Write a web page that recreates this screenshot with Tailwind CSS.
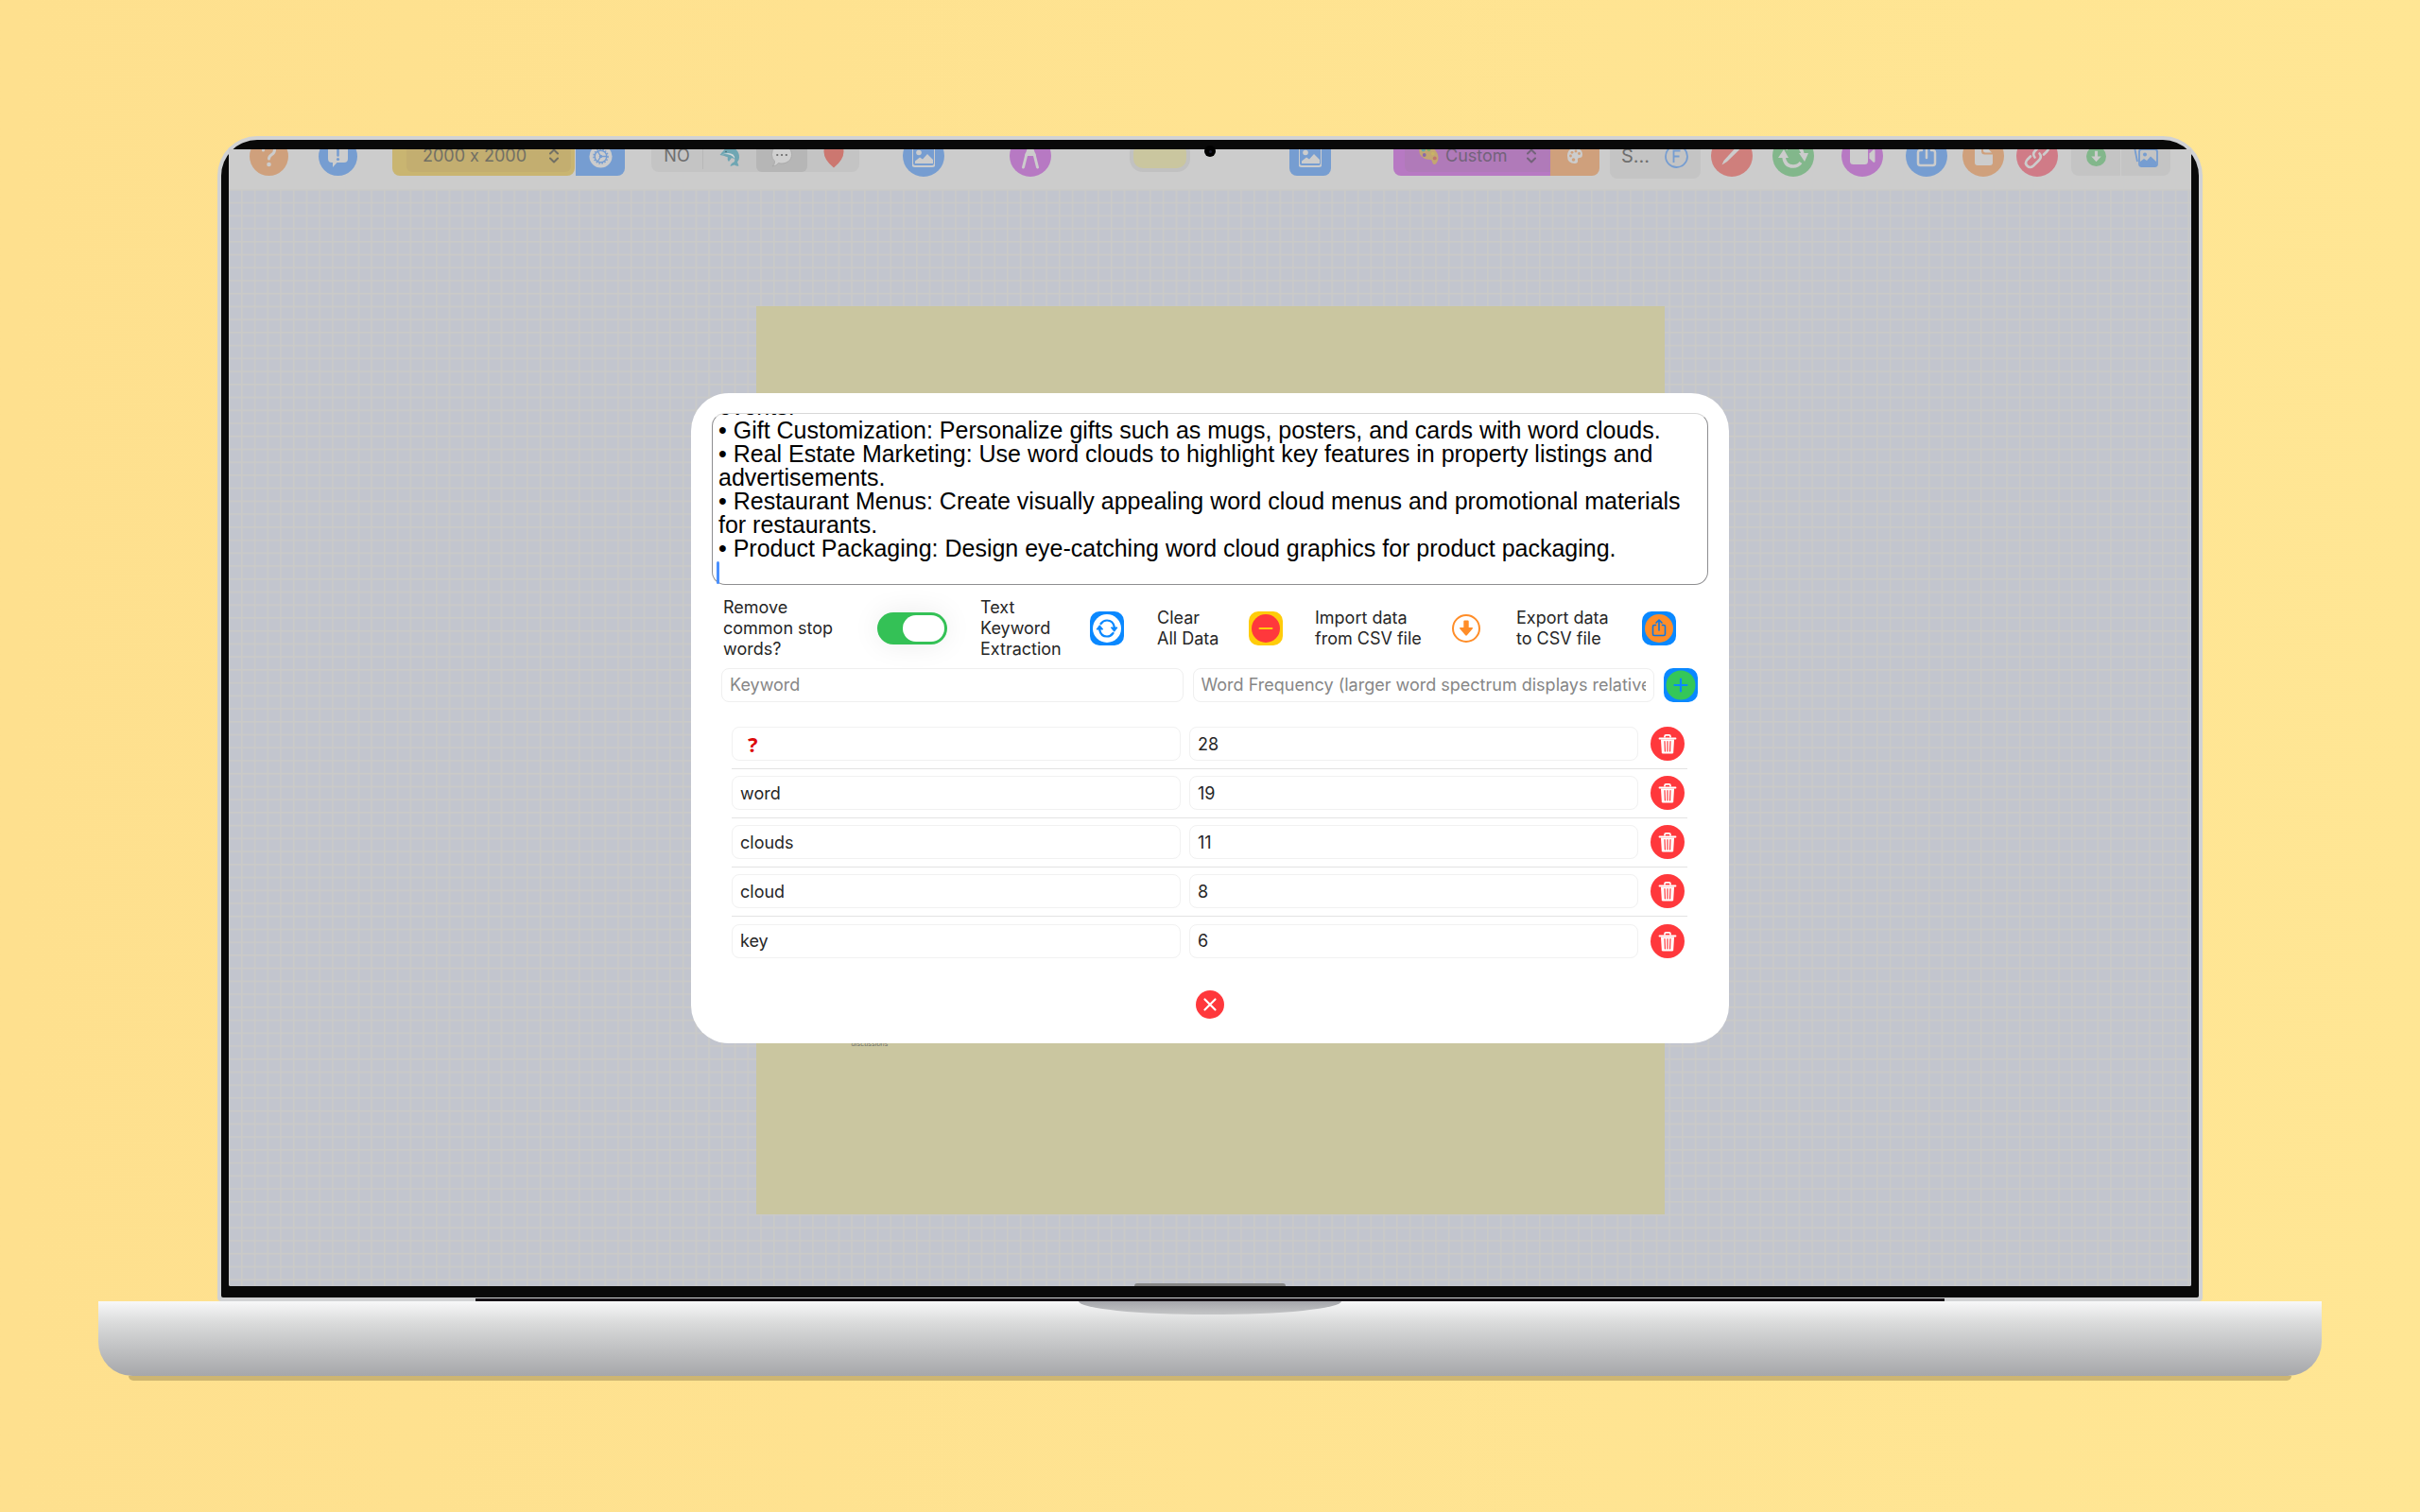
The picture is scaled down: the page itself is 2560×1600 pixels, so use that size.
<!DOCTYPE html>
<html lang="en">
<head>
    <meta charset="UTF-8">
    <meta name="viewport" content="width=device-width, initial-scale=1.0">
    <title>Word Cloud - Data Editor</title>
    <script src="https://cdn.jsdelivr.net/npm/@tailwindcss/browser@4"></script>
</head>
<body class="min-h-screen flex flex-col pt-36 pb-[144px] px-[104px] bg-linear-to-r from-[#fee08e] to-[#ffe694] font-[Inter,sans-serif] [font-feature-settings:'calt'_0] text-[#262626]">

    <!-- Shared icons -->
    <svg class="hidden">
        <symbol id="icon-trash" viewBox="0 0 36 36">
            <path d="M15 11.500v-1.300q0-1.400 1.400-1.400h3.200q1.400 0 1.400 1.400v1.300" fill="none" stroke="#fff" stroke-width="1.700"/>
            <path d="M9.500 12.500h17" stroke="#fff" stroke-width="1.800" stroke-linecap="round"/>
            <path d="M11 13.500h14l-.8 13.700q-.1 1.300-1.400 1.300h-9.600q-1.300 0-1.400-1.300z" fill="#fff"/>
            <path d="M15 15.500l.4 10.500M18 15.500v10.500M21 15.500l-.4 10.500" stroke="#ff383c" stroke-width="1.200" stroke-linecap="round"/>
        </symbol>
        <symbol id="icon-picture" viewBox="0 0 24 24">
            <rect x="0" y="1" width="24" height="22" rx="3" fill="none" stroke="currentColor" stroke-width="2"/>
            <circle cx="7" cy="8.500" r="2.800" fill="currentColor"/>
            <path d="M3 20v-2.500l5-4 3 2 5-5.500 6 6v4z" fill="currentColor"/>
        </symbol>
        <symbol id="icon-chevrons" viewBox="0 0 12 16">
            <path d="M2 5.500l4-4 4 4M2 10.500l4 4 4-4" fill="none" stroke="currentColor" stroke-width="2" stroke-linecap="round" stroke-linejoin="round"/>
        </symbol>
    </svg>

    <!-- Laptop lid -->
    <div class="relative flex-1 flex flex-col mx-[126px] px-1 pt-1 pb-1 bg-[#d1d2d4] rounded-t-[42px] rounded-b-[4px]">
        <div class="flex-1 flex flex-col px-2 pt-[10px] pb-3 bg-[#090909] rounded-t-[38px] rounded-b-[2px]">
            <div class="relative flex-1 flex flex-col overflow-hidden bg-[#c9c9c9] rounded-[2px]">

                <!-- Toolbar, scrolled partly under the bezel -->
                <header class="flex items-center h-[70px] -mt-[28px] px-[22px] bg-[#cccccc] text-[#cccccc]">
                    <button aria-label="Help" class="size-[41px] shrink-0 rounded-full bg-[#cfa07c]">
                        <svg viewBox="0 0 41 41">
                            <path d="M14.500 14q.8-5.500 6.200-5.500 5.800 0 5.800 5 0 3.200-3.300 5.200-2.700 1.700-2.700 4.300" fill="none" stroke="currentColor" stroke-width="3" stroke-linecap="round"/>
                            <circle cx="20.500" cy="29" r="2.300" fill="currentColor"/>
                        </svg>
                    </button>
                    <button aria-label="Feedback" class="ml-8 size-[41px] shrink-0 rounded-full bg-[#769dd1]">
                        <svg viewBox="0 0 41 41">
                            <path d="M14 9h13q4 0 4 4v10q0 4-4 4h-7.500l-4.500 5v-5h-1q-4 0-4-4V13q0-4 4-4z" fill="currentColor"/>
                            <path d="M20.500 12.500v7" stroke="#769dd1" stroke-width="2.500" stroke-linecap="round"/>
                            <circle cx="20.500" cy="23.500" r="1.600" fill="#769dd1"/>
                        </svg>
                    </button>

                    <div class="relative ml-[37px] w-[193px] h-[42px] shrink-0 pl-[15px] pr-1 py-1 rounded-[8px] bg-[#c9b571]">
                        <select aria-label="Canvas size" class="block w-full h-full appearance-none rounded-[6px] bg-[#c3ae70] pl-[17px] text-lg text-[#727064]">
                            <option>2000 x 2000</option>
                        </select>
                        <svg class="absolute right-4 top-[13px] w-3 h-4 text-[#727064]"><use href="#icon-chevrons"/></svg>
                    </div>
                    <button aria-label="Canvas settings" class="ml-px w-[52px] h-[42px] shrink-0 flex items-center justify-center rounded-r-[8px] bg-[#769dd1]">
                        <svg class="size-[25px]" viewBox="0 0 26 26">
                            <circle cx="13" cy="13" r="12.500" fill="currentColor"/>
                            <circle cx="13" cy="13" r="6.500" fill="none" stroke="#769dd1" stroke-width="1.500"/>
                            <circle cx="13" cy="13" r="7.800" fill="none" stroke="#769dd1" stroke-width="1.600" stroke-dasharray="1.600 1.600"/>
                            <path d="M13 13h6.500M13 13l-3.300-5.600M13 13l-3.300 5.600" stroke="#769dd1" stroke-width="1.400"/>
                            <circle cx="13" cy="13" r="1.800" fill="#769dd1"/>
                        </svg>
                    </button>

                    <div role="group" aria-label="Shape" class="ml-7 w-[220px] h-[34px] shrink-0 flex items-center rounded-[8px] bg-[#c4c4c4]">
                        <button class="w-[55px] text-lg text-[#6f6f6f] border-r border-[#b8b8b8]">NO</button>
                        <button aria-label="Dolphin" class="flex-1 flex justify-center">
                            <svg class="size-6" viewBox="0 0 24 24">
                                <path d="M1.500 11Q3 9 4.500 7.500 7 3.500 11 3l2.500-3L16 3.500q6 3 6 10 0 3-2 5l1.500 4q-3 .5-4.500-1l-4.500 1.500q.5-3.500 4-4.500 1-1.500.8-3L14 14l-3 4q-2-1.500-1-4.500-4-2-8.500-2.500z" fill="#6fa6b3"/>
                                <path d="M3 10.500q5-1 9.500.5 4 1.700 4.500 4.500 1-2.500-1.500-5Q11 7.500 3 10.500z" fill="#d3d8da"/>
                                <circle cx="8" cy="7.500" r=".8" fill="#44646c"/>
                            </svg>
                        </button>
                        <button aria-label="Speech bubble" aria-pressed="true" class="w-[54px] h-full flex items-center justify-center rounded-[6px] bg-[#b6b6b6]">
                            <svg class="size-6" viewBox="0 0 24 24">
                                <path d="M12 1c6 0 10.500 4 10.500 9.500S18 20 12 20q-2 0-3.500-.5Q6.500 22.500 2 23q3-2.500 2.500-5.500Q1.500 15 1.500 10.500 1.500 1 12 1z" fill="#d0d0d0" stroke="#a6a6a6" stroke-width=".8"/>
                                <path d="M7.200 11h.1M12 11h.1M16.800 11h.1" stroke="#6c6c6c" stroke-width="2.200" stroke-linecap="round"/>
                            </svg>
                        </button>
                        <button aria-label="Heart" class="w-[55px] flex justify-center">
                            <svg class="w-[22px] h-[25px]" viewBox="0 0 22 25">
                                <path d="M11 24.500Q.5 16 .5 7.500.5 1 6 1q3.500 0 5 3.500Q12.500 1 16 1q5.500 0 5.500 6.500 0 8.500-10.500 17z" fill="#cc7770"/>
                            </svg>
                        </button>
                    </div>

                    <button aria-label="Background picture" class="ml-[46px] size-11 shrink-0 flex items-center justify-center rounded-full bg-[#769dd1]">
                        <svg class="size-6 overflow-visible"><use href="#icon-picture"/></svg>
                    </button>
                    <button aria-label="Drawing compass" class="ml-[69px] size-11 shrink-0 rounded-full bg-[#b779c3]">
                        <svg viewBox="0 0 44 44">
                            <path d="M20.500 8h3v5h-3zM19.500 12h5l3.500 10H16z" fill="currentColor"/>
                            <path d="M18 20l-3.500 14M26 20l3.500 14" stroke="currentColor" stroke-width="3" stroke-linecap="round"/>
                        </svg>
                    </button>
                    <button aria-label="Canvas colour" class="ml-[83px] w-16 h-[34px] shrink-0 rounded-[14px] border-4 border-[#c1c1c1] bg-[#cac69f]"></button>
                    <button aria-label="Add picture" class="ml-[105px] w-11 h-[42px] shrink-0 flex items-center justify-center rounded-[8px] bg-[#769dd1]">
                        <svg class="size-6 overflow-visible"><use href="#icon-picture"/></svg>
                    </button>

                    <div class="relative ml-[66px] w-[166px] h-[42px] shrink-0 pl-3 py-1 rounded-l-[8px] bg-[#b779c3]">
                        <select aria-label="Colour theme" class="block w-full h-full appearance-none rounded-l-[6px] bg-[#b07ab9] pl-[43px] text-lg text-[#73637a]">
                            <option>Custom</option>
                        </select>
                        <svg class="absolute left-[26px] top-[9px] size-[23px]" viewBox="0 0 24 24">
                            <path d="M2 4q3-4 9-3 7 2 10.500 9 2.500 7-1.500 11-3 2-4-1-.5-4-4-3.500Q8 17 4 13 0 9 2 4z" fill="#c3a671"/>
                            <circle cx="6" cy="5.500" r="2.300" fill="#66a8a6"/><circle cx="12" cy="5.500" r="2" fill="#7fae70"/>
                            <circle cx="16.500" cy="10" r="2" fill="#c8b365"/><circle cx="18.500" cy="15" r="2" fill="#c0766d"/>
                            <circle cx="7" cy="11.500" r="2" fill="#8b69a8"/>
                        </svg>
                        <svg class="absolute right-[14px] top-[13px] w-3 h-4 text-[#73637a]"><use href="#icon-chevrons"/></svg>
                    </div>
                    <button aria-label="Edit palette" class="w-[52px] h-[42px] shrink-0 flex items-center justify-center rounded-r-[8px] bg-[#cfa07c]">
                        <svg class="size-[18px]" viewBox="0 0 18 18">
                            <path d="M9 1q8 0 8 6.500 0 3.500-3.500 3.500-2 0-1.500 2.500.5 3.500-3 3.500Q1 17 1 9t8-8z" fill="currentColor"/>
                            <g fill="#cfa07c"><circle cx="4.500" cy="9" r="1.400"/><circle cx="6" cy="5.300" r="1.400"/><circle cx="10" cy="4" r="1.400"/><circle cx="13.500" cy="6.500" r="1.400"/><circle cx="7.500" cy="13" r="1.800"/></g>
                        </svg>
                    </button>

                    <button class="ml-[11px] w-24 h-12 shrink-0 flex items-center justify-between pl-3 pr-[13px] rounded-[8px] bg-[#c4c4c4] text-xl text-[#6f6f6f]">
                        <span>S...</span>
                        <svg class="size-[25px]" viewBox="0 0 25 25" fill="none" stroke="#769dd1">
                            <circle cx="12.500" cy="12.500" r="11.500" stroke-width="1.800"/>
                            <path d="M9.500 19V6.500h7M9.500 12.500h6" stroke-width="1.800"/>
                        </svg>
                    </button>

                    <button aria-label="Edit" class="ml-[11px] size-11 shrink-0 rounded-full bg-[#cf7f7c]">
                        <svg viewBox="0 0 44 44"><path d="M11.500 31.500l2-4.500L30 9l3.500 3L17 28z" fill="currentColor"/></svg>
                    </button>
                    <button aria-label="Refresh" class="ml-[21px] size-11 shrink-0 rounded-full bg-[#82b78b]">
                        <svg viewBox="0 0 44 44" fill="none" stroke="currentColor" stroke-width="3.500">
                            <path d="M12 23q1 10 10 10 5 0 8-4M32 21q-1-10-10-10-5 0-8 4"/>
                            <path d="M6 24l6-9 5 9zM28 19h10l-4 9z" fill="currentColor" stroke="none"/>
                        </svg>
                    </button>
                    <button aria-label="Record video" class="ml-[29px] size-11 shrink-0 rounded-full bg-[#b779c3]">
                        <svg viewBox="0 0 44 44" fill="currentColor"><rect x="9" y="12" width="19" height="19" rx="3.500"/><path d="M29.500 19.500l4-4q2-1 2 1v11q0 2-2 1l-4-4z"/></svg>
                    </button>
                    <button aria-label="Share" class="ml-6 size-11 shrink-0 rounded-full bg-[#769dd1]">
                        <svg viewBox="0 0 44 44" fill="none" stroke="currentColor" stroke-width="2.500" stroke-linecap="round">
                            <path d="M17 16h-1.500q-2.500 0-2.500 2.500v11q0 2.500 2.500 2.500h13q2.500 0 2.500-2.500v-11q0-2.500-2.500-2.500H27M22 24V8M18 11l4-4 4 4"/>
                        </svg>
                    </button>
                    <button aria-label="Open document" class="ml-4 size-11 shrink-0 rounded-full bg-[#cfa07c]">
                        <svg viewBox="0 0 44 44" fill="currentColor"><path d="M15 9h5v8q0 3.500 3.500 3.500H32V29q0 3-3 3H16q-3 0-3-3V11q0-2 2-2z"/><path d="M22 9v7q0 2.500 2.500 2.500H31z"/></svg>
                    </button>
                    <button aria-label="Link" class="ml-[13px] size-11 shrink-0 rounded-full bg-[#d07b87]">
                        <svg viewBox="0 0 44 44" fill="none" stroke="currentColor" stroke-width="2.600" stroke-linecap="round">
                            <path d="M19.500 23.500q-3-3.500.5-7l6-6q3.500-3 6.500 0t0 6.500l-3.500 3.500"/>
                            <path d="M24.500 19.500q3 3.500-.5 7l-6 6q-3.500 3-6.500 0t0-6.500l3.500-3.500"/>
                        </svg>
                    </button>
                    <div class="ml-[14px] w-[105px] h-[42px] shrink-0 flex items-center rounded-[8px] bg-[#c4c4c4]">
                        <button aria-label="Download" class="w-[53px] h-full flex items-center justify-center border-r border-[#cccccc]">
                            <svg class="size-[21px]" viewBox="0 0 20 20"><circle cx="10" cy="10" r="10" fill="#82b78b"/><path d="M8.500 4.500h3V10H15l-5 5.500L5 10h3.500z" fill="currentColor"/></svg>
                        </button>
                        <button aria-label="Gallery" class="flex-1 h-full flex items-center justify-center">
                            <svg class="size-[26px]" viewBox="0 0 26 26">
                                <path d="M4 19L1.500 6.500Q1 4 3.500 3.500l14-1" fill="none" stroke="#769dd1" stroke-width="1.800"/>
                                <rect x="6" y="6" width="19" height="18" rx="2.500" fill="none" stroke="#769dd1" stroke-width="1.800"/>
                                <circle cx="12" cy="11.500" r="2" fill="#769dd1"/>
                                <path d="M7 23v-4l4-3 3 2 4-4.500 6 5.500v4z" fill="#769dd1"/>
                            </svg>
                        </button>
                    </div>
                </header>

                <!-- Canvas with its grid -->
                <main class="relative flex-1">
                    <svg class="absolute inset-0 w-full h-full" aria-hidden="true">
                        <defs>
                            <pattern id="grid" x="13" y="0" width="13.730" height="13.730" patternUnits="userSpaceOnUse">
                                <rect width="13.730" height="13.730" fill="#c2c5ce"/>
                                <path d="M0 .8h13.730M.8 0v13.730" stroke="#cacac8" stroke-width="1.600"/>
                            </pattern>
                        </defs>
                        <rect width="100%" height="100%" fill="url(#grid)"/>
                    </svg>
                    <div class="relative mx-auto mt-[124px] w-[961px] aspect-square bg-[#cac6a0] pt-[775px] pl-[101px]">
                        <div class="flex items-start gap-1 text-[7px] leading-3 italic">
                            <span class="text-[#6f7068]">discussions</span>
                            <!-- Feet of the lettering that runs under the dialog -->
                            <svg class="w-[180px] h-3" viewBox="0 0 180 12" fill="none" stroke="#8d77b5" stroke-width="2" stroke-linecap="round">
                                <path d="M2 3h3M21 3h1M47 3.500h1M60 4h4M75 4h4M90 3.500h1M101 4h3M112 4h3M162 3h1"/>
                            </svg>
                        </div>
                    </div>
                </main>

                <!-- Data editor -->
                <div class="absolute inset-0 flex items-center justify-center">
                    <section role="dialog" aria-label="Word data" class="w-full max-w-[1098px] rounded-[40px] bg-white px-[22px] pt-[21px] pb-[26px]">
                        <div class="relative">
                            <textarea id="source" aria-label="Source text" class="block w-full h-[182px] resize-none overflow-hidden rounded-[14px] border border-[#8e8e90] border-t-[#d8d8d8] pl-[6px] pr-5 font-['Liberation_Sans',sans-serif] text-[25px] leading-[25px] text-black">
events.
• Gift Customization: Personalize gifts such as mugs, posters, and cards with word clouds.
• Real Estate Marketing: Use word clouds to highlight key features in property listings and advertisements.
• Restaurant Menus: Create visually appealing word cloud menus and promotional materials for restaurants.
• Product Packaging: Design eye-catching word cloud graphics for product packaging.
</textarea>
                            <span class="absolute left-[5px] bottom-px w-[3px] h-6 rounded-full bg-[#4a90ff]"></span>
                        </div>

                        <div class="flex items-center h-[84px] mt-1 pl-3 text-lg leading-[22px]">
                            <label for="stopwords" class="w-[163px] pr-8">Remove common stop words?</label>
                            <input id="stopwords" type="checkbox" checked class="appearance-none relative w-[74px] h-[34px] rounded-full bg-[#34c156] shadow-[0_0_30px_rgba(0,0,0,0.08)] before:absolute before:right-[3px] before:top-[3px] before:w-11 before:h-7 before:rounded-full before:bg-white">
                            <span class="ml-[35px] w-[116px] pr-6">Text Keyword Extraction</span>
                            <button aria-label="Text keyword extraction" class="size-9 rounded-[10px] bg-[#0a88ff]">
                                <svg viewBox="0 0 36 36">
                                    <circle cx="18" cy="18" r="15" fill="#fff"/>
                                    <path d="M11.500 13q2.500-3.500 6.500-3.500 6.500 0 7.800 7M24.500 23q-2.500 3.500-6.500 3.500-6.500 0-7.800-7" fill="none" stroke="#0a88ff" stroke-width="2.200" stroke-linecap="round"/>
                                    <path d="M22.300 17h6.700l-3.300 4.300zM13.700 19H7l3.300-4.300z" fill="#0a88ff" stroke="#0a88ff" stroke-linejoin="round"/>
                                </svg>
                            </button>
                            <span class="ml-[35px] w-[97px]">Clear<br>All Data</span>
                            <button aria-label="Clear all data" class="size-9 rounded-[10px] bg-[#ffcc0a]">
                                <svg viewBox="0 0 36 36"><circle cx="18" cy="18" r="15" fill="#ff383c"/><path d="M11.500 18h13" stroke="#ffcc0a" stroke-width="2" stroke-linecap="round"/></svg>
                            </button>
                            <span class="ml-[34px] w-[142px]">Import data<br>from CSV file</span>
                            <button aria-label="Import data from CSV file" class="size-9">
                                <svg viewBox="0 0 36 36"><circle cx="18" cy="18" r="14" fill="none" stroke="#ff8d28" stroke-width="2"/><path d="M15.300 10.500q0-1 1-1h3.400q1 0 1 1V17h3.600q1.200.3.500 1.300l-6 7q-.8.800-1.600 0l-6-7q-.7-1 .5-1.300h3.600z" fill="#ff8d28"/></svg>
                            </button>
                            <span class="ml-[35px] w-[133px]">Export data<br>to CSV file</span>
                            <button aria-label="Export data to CSV file" class="size-9 rounded-[10px] bg-[#0a88ff]">
                                <svg viewBox="0 0 36 36"><circle cx="18" cy="18" r="15" fill="#ff8d28"/><path d="M14.500 14.500H13q-1.500 0-1.500 1.500v8q0 1.500 1.500 1.500h10q1.500 0 1.500-1.500v-8q0-1.500-1.500-1.500h-1.500M18 20V9.500M15 12l3-3 3 3" fill="none" stroke="#0a78e8" stroke-width="1.600" stroke-linecap="round" stroke-linejoin="round"/></svg>
                            </button>
                        </div>

                        <form class="flex items-center gap-[10px] pl-[10px] pr-[11px] text-lg">
                            <input aria-label="Keyword" placeholder="Keyword" class="flex-1 min-w-0 h-9 px-2 rounded-[8px] border border-[#efefef] placeholder:text-[#868686]">
                            <input aria-label="Word frequency" placeholder="Word Frequency (larger word spectrum displays relatively larger)" class="flex-1 min-w-0 h-9 px-2 rounded-[8px] border border-[#efefef] placeholder:text-[#868686]">
                            <button type="button" aria-label="Add keyword" class="size-9 shrink-0 rounded-[10px] bg-[#0a88ff]">
                                <svg viewBox="0 0 36 36"><circle cx="18" cy="18" r="15.500" fill="#34c759"/><path d="M11.500 18h13M18 11.500v13" stroke="#0a88ff" stroke-width="2.200" stroke-linecap="round"/></svg>
                            </button>
                        </form>

                        <ul id="words" class="mt-[19px] ml-[21px] mr-[22px] text-lg"></ul>

                        <div class="flex justify-center mt-[26px]">
                            <button aria-label="Close" class="size-[30px] rounded-full bg-[#ff383c]">
                                <svg viewBox="0 0 30 30"><path d="M9.500 9.500l11 11M20.500 9.500l-11 11" stroke="#fff" stroke-width="2.200" stroke-linecap="round"/></svg>
                            </button>
                        </div>
                    </section>
                </div>

                <!-- Bump above the hinge -->
                <div class="absolute bottom-0 inset-x-0 mx-auto w-40 h-[3px] rounded-t-[8px] bg-[#858585]"></div>
            </div>
        </div>

        <!-- Camera -->
        <div class="absolute top-[10px] inset-x-0 mx-auto size-3 rounded-full bg-black flex items-center justify-center">
            <span class="size-[3px] rounded-full bg-[#1b1b2e]"></span>
        </div>
        <!-- Hinge -->
        <div class="absolute bottom-0 inset-x-0 mx-auto w-[74%] h-[3px] bg-[#151015]"></div>
    </div>

    <!-- Laptop base -->
    <div class="relative h-[79px] rounded-b-[36px] bg-linear-to-b from-[#f8f8f9] via-[#d9dada] via-30% to-[#a6a7aa]">
        <div class="mx-auto w-[278px] h-[14px] rounded-b-[50%_100%] bg-linear-to-b from-[#a5a6ab] to-[#c4c5c6]"></div>
        <div class="absolute top-full inset-x-8 h-[5px] rounded-b-[16px] bg-[#cdb571]"></div>
    </div>

    <script>
        const words = [
            { keyword: '?', count: 28 },
            { keyword: 'word', count: 19 },
            { keyword: 'clouds', count: 11 },
            { keyword: 'cloud', count: 8 },
            { keyword: 'key', count: 6 },
        ];

        const list = document.getElementById('words');
        words.forEach(({ keyword, count }) => {
            // The question mark is shown as the red symbol
            const tone = keyword === '?' ? "pl-4 text-[22px] font-bold text-[#dc0a0a] font-['Noto_Sans',sans-serif]" : 'pl-2';
            list.insertAdjacentHTML('beforeend', `
                <li class="grid grid-cols-[minmax(0,1fr)_minmax(0,1fr)_40px] gap-[9px] items-center h-[52px] border-b border-[#e3e3e3] last:border-b-0 pr-[3px]">
                    <input aria-label="Keyword" value="${keyword}" class="w-full h-9 pr-2 rounded-[8px] border border-[#f1f1f1] ${tone}">
                    <input aria-label="Frequency of ${keyword}" value="${count}" class="w-full h-9 px-2 rounded-[8px] border border-[#f1f1f1]">
                    <button aria-label="Delete ${keyword}" class="size-9 justify-self-end rounded-full bg-[#ff383c]">
                        <svg class="size-9"><use href="#icon-trash"/></svg>
                    </button>
                </li>`);
        });

        // Keep the end of the text in view
        const source = document.getElementById('source');
        source.scrollTop = source.scrollHeight;
    </script>
</body>
</html>
